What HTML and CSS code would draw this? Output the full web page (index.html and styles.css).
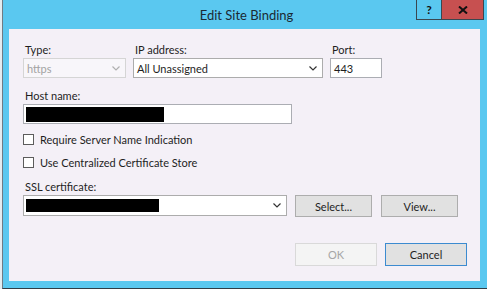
FILE: index.html
```html
<!DOCTYPE html>
<html lang="en">
<head>
  <meta charset="UTF-8">
  <title>Edit Site Binding</title>
  <link rel="stylesheet" href="styles.css">
</head>
<body>
  <div class="window">
    <div class="titlebar">
      <span></span>
      <span class="title">Edit Site Binding</span>
      <div class="caption-btns">
        <div class="cap-btn help">?</div>
        <div class="cap-btn close">
          <svg width="10" height="8" viewBox="0 0 10 8"><path d="M1 0.5 L9 7.5 M9 0.5 L1 7.5" stroke="#111" stroke-width="2"/></svg>
        </div>
      </div>
    </div>
    <div class="client">
      <div class="top-row">
        <div class="field type-field">
          <div class="label">Type:</div>
          <div class="combo disabled">
            <span>https</span>
            <svg class="chev" width="8" height="5" viewBox="0 0 8 5"><path d="M0.5 0.5 L4 4 L7.5 0.5" fill="none" stroke="#b0b0b0" stroke-width="1.2"/></svg>
          </div>
        </div>
        <div class="field ip-field">
          <div class="label">IP address:</div>
          <div class="combo">
            <span>All Unassigned</span>
            <svg class="chev" width="8" height="5" viewBox="0 0 8 5"><path d="M0.5 0.5 L4 4 L7.5 0.5" fill="none" stroke="#333" stroke-width="1.2"/></svg>
          </div>
        </div>
        <div class="field port-field">
          <div class="label">Port:</div>
          <div class="textbox">443</div>
        </div>
      </div>

      <div class="field host-field">
        <div class="label">Host name:</div>
        <div class="textbox"><span class="redact host-redact"></span></div>
      </div>

      <div class="check first">
        <span class="box"></span>
        <span>Require Server Name Indication</span>
      </div>
      <div class="check">
        <span class="box"></span>
        <span>Use Centralized Certificate Store</span>
      </div>

      <div class="field cert-field">
        <div class="label">SSL certificate:</div>
        <div class="cert-row">
          <div class="combo cert-combo">
            <span class="redact cert-redact"></span>
            <svg class="chev" width="8" height="5" viewBox="0 0 8 5"><path d="M0.5 0.5 L4 4 L7.5 0.5" fill="none" stroke="#333" stroke-width="1.2"/></svg>
          </div>
          <div class="btn select-btn">Select...</div>
          <div class="btn view-btn">View...</div>
        </div>
      </div>

      <div class="footer">
        <div class="btn ok-btn">OK</div>
        <div class="btn cancel-btn">Cancel</div>
      </div>
    </div>
  </div>
</body>
</html>
```

FILE: styles.css
```css
body {
  margin: 0;
  background-color: #e4ecf0;
  font-family: Lato, "Noto Sans", sans-serif;
  font-size: 11px;
  color: #1e1e1e;
}
.window {
  margin-left: 2px;
  width: 478px;
  height: 288px;
  border-left: 1px solid #6f7b84;
  border-bottom: 1px solid #2f3d47;
  background-color: #5ac8f0;
  padding: 0 3px 0 6px;
  display: flex;
  flex-direction: column;
}
.titlebar {
  height: 29px;
  display: grid;
  grid-template-columns: 1fr auto 1fr;
  margin-left: -6px;
  margin-right: -3px;
}
.title {
  font-size: 13px;
  line-height: 30px;
  color: #1b2a33;
}
.caption-btns {
  justify-self: end;
  display: flex;
  height: 20px;
  margin-right: 6px;
}
.cap-btn {
  height: 19px;
  display: flex;
  align-items: center;
  justify-content: center;
  border: 1px solid #3a4750;
  border-top: none;
}
.help {
  width: 24px;
  font-weight: bold;
  font-size: 12px;
  color: #111;
  border-right: none;
}
.close {
  width: 41px;
  background-color: #c75050;
}
.client {
  width: 471px;
  height: 252px;
  box-sizing: border-box;
  background-color: #f4f0f7;
  padding-left: 14px;
  padding-right: 13px;
}
.label {
  line-height: 15px;
  padding-left: 2px;
  margin-bottom: 1px;
}
.top-row {
  display: flex;
  gap: 7px;
  margin-top: 13px;
}
.type-field { width: 103px; }
.ip-field { width: 190px; }
.port-field { width: 52px; }
.combo, .textbox {
  height: 20px;
  box-sizing: border-box;
  border: 1px solid #acacac;
  background-color: #fff;
  display: flex;
  align-items: center;
  padding-left: 3px;
  padding-right: 5px;
}
.combo span { flex: 1; }
.combo.disabled {
  border-color: #d5d5d5;
  background-color: #f8f6fa;
  color: #a2a2a2;
}
.textbox { border-color: #abadb3; }
.host-field {
  width: 269px;
  margin-top: 10px;
}
.redact {
  display: block;
  background-color: #000;
  height: 15px;
}
.host-redact { width: 138px; margin-left: -1px; }
.check {
  display: flex;
  align-items: center;
  gap: 6px;
  height: 16px;
}
.check.first { margin-top: 7px; }
.check + .check { margin-top: 7px; }
.box {
  width: 11px;
  height: 11px;
  box-sizing: border-box;
  border: 1px solid #5c5c5c;
  background-color: #fff;
}
.cert-field { margin-top: 9px; }
.cert-row {
  display: flex;
  align-items: flex-start;
}
.cert-combo {
  width: 264px;
  height: 21px;
  margin-right: 8px;
}
.cert-combo .cert-redact {
  flex: none;
  width: 133px;
  height: 13px;
  margin-left: -1px;
}
.cert-combo .chev { margin-left: auto; }
.btn {
  height: 22px;
  box-sizing: border-box;
  border: 1px solid #adadad;
  background-color: #e1e1e1;
  display: flex;
  align-items: center;
  justify-content: center;
}
.select-btn { width: 77px; margin-right: 9px; }
.view-btn { width: 77px; }
.footer {
  display: flex;
  justify-content: flex-end;
  gap: 8px;
  margin-top: 26px;
}
.ok-btn, .cancel-btn { width: 82px; height: 23px; }
.ok-btn {
  background-color: #f4f4f4;
  border-color: #d9d9d9;
  color: #a6a6a6;
}
.cancel-btn {
  border-color: #3c8bd0;
}
```
